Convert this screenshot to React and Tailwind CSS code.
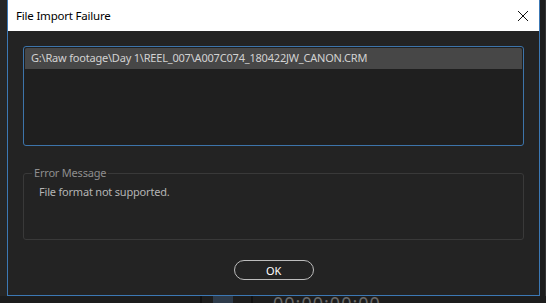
export default function App() {
  return (
    <div className="w-[546px] h-[303px] overflow-hidden bg-[#1d1d1d] flex flex-col font-['Noto_Sans',sans-serif] tracking-[-0.2px]">
      <div className="flex h-[296px] shrink-0">
        {/* panel edge behind the dialog */}
        <div className="w-[7px] bg-[#262626]" />

        {/* dialog window */}
        <div className="w-[533px] flex flex-col border-x border-b border-[#3c78b4] bg-[#232323]">
          <div className="h-[31px] shrink-0 bg-white flex items-center justify-between pl-[8px] pr-[8px]">
            <span className="text-[11.5px] text-black">File Import Failure</span>
            <svg width="12" height="12" viewBox="0 0 12 12" className="mr-[2px]">
              <path d="M1 1L11 11M11 1L1 11" stroke="#111" strokeWidth="1" />
            </svg>
          </div>

          <div className="flex flex-col px-[15px] pt-[15px]">
            <div className="h-[100px] border border-[#3d74aa] rounded-[3px] bg-[#1f1f1f] p-[1px]">
              <div className="h-[21px] bg-[#474747] flex items-center pl-[6px] rounded-t-[2px]">
                <span className="text-[11px] text-[#d2d2d2]">G:\Raw footage\Day 1\REEL_007\A007C074_180422JW_CANON.CRM</span>
              </div>
            </div>

            <fieldset className="mt-[19px] h-[75px] border border-[#393939] rounded-[3px] pl-[8px]">
              <legend className="px-[2px] text-[11px] leading-[16px] text-[#8e8e8e]">Error Message</legend>
              <div className="pl-[7px] pt-[3px] text-[11px] text-[#b4b4b4]">File format not supported.</div>
            </fieldset>

            <div className="flex justify-center mt-[20px]">
              <button className="w-[80px] h-[20px] rounded-full border border-[#bcbcbc] text-[11px] leading-none text-white">
                OK
              </button>
            </div>
          </div>
        </div>

        <div className="flex-1 bg-[#1d1d1d] border-r border-[#333]" />
      </div>

      {/* bottom of the panel behind */}
      <div className="flex-1 flex items-start">
        <div className="w-[200px]" />
        <div className="w-[2px] h-full bg-[#111]" />
        <div className="w-[20px] h-full ml-[11px] bg-[#2e3b4a]" />
        <div className="w-[2px] h-full ml-[18px] bg-[#111]" />
        <div className="ml-[20px] -mt-[2px] text-[18px] leading-none tracking-[1px] text-[#6a6a6a]">00:00:00:00</div>
      </div>
    </div>
  )
}
